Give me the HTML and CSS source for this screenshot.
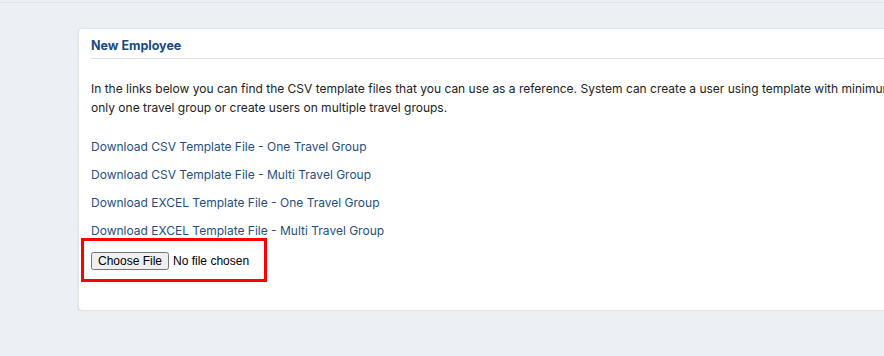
FILE: index.html
```html
<!DOCTYPE html>
<html lang="en">
<head>
  <meta charset="UTF-8">
  <meta name="viewport" content="width=device-width, initial-scale=1.0">
  <title>New Employee</title>
  <link rel="stylesheet" href="styles.css">
</head>
<body>
  <div class="topbar"></div>

  <div class="card">
    <h2 class="card-title">New Employee</h2>

    <p class="intro">
      In the links below you can find the CSV template files that you can use as a reference. System can create a user using template with minimum information for<br>
      only one travel group or create users on multiple travel groups.
    </p>

    <div class="downloads">
      <a href="#">Download CSV Template File - One Travel Group</a>
      <a href="#">Download CSV Template File - Multi Travel Group</a>
      <a href="#">Download EXCEL Template File - One Travel Group</a>
      <a href="#">Download EXCEL Template File - Multi Travel Group</a>
    </div>

    <div class="upload">
      <input type="file" class="file-input">
    </div>
  </div>
</body>
</html>
```

FILE: styles.css
```css
* {
  margin: 0;
  padding: 0;
  box-sizing: border-box;
}

body {
  font-family: Inter, "Noto Sans", Arial, sans-serif;
  background: #ecf0f4;
  color: #222;
  font-size: 12px;
  overflow: hidden;
}

.topbar {
  height: 3px;
  border-bottom: 1px solid #dfe4ea;
}

.card {
  width: 1000px;
  margin: 25px 0 0 78px;
  padding: 8px 12px 28px;
  background: #fff;
  border: 1px solid #e1e5ea;
  border-radius: 4px;
  box-shadow: 0 1px 2px rgba(0, 0, 0, 0.12);
}

.card-title {
  font-size: 12.5px;
  font-weight: 700;
  line-height: 18px;
  color: #1b4a82;
  padding-bottom: 3px;
  border-bottom: 1px solid #dcdfe3;
}

.intro {
  margin-top: 20px;
  line-height: 19px;
  color: #222;
}

.downloads {
  display: flex;
  flex-direction: column;
  gap: 9px;
  margin-top: 20px;
}

.downloads a {
  line-height: 19px;
  color: #1f4f7f;
  text-decoration: none;
}

.upload {
  width: 186px;
  height: 44px;
  margin: -2px 0 0 -10px;
  padding: 11px 0 0 7px;
  border: 3px solid #ff0000;
}

.file-input {
  font-family: "Liberation Sans", Arial, sans-serif;
  font-size: 12px;
  color: #000;
}

.file-input::file-selector-button {
  padding: 0 5px;
}
```
